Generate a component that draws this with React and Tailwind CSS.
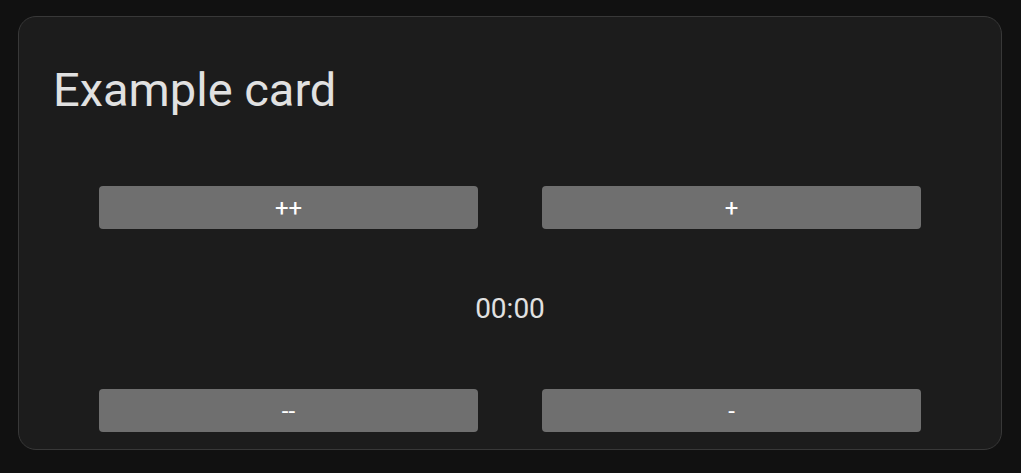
const Btn = ({ label }) => (
  <button className="h-[43px] w-[379px] rounded-[4px] bg-[#6f6f6f] text-[24px] leading-none text-white">
    {label}
  </button>
);

const App = () => {
  return (
    <div
      className="min-h-screen bg-[#111111] pl-[18px] pt-[16px]"
      style={{ fontFamily: "Roboto, 'Liberation Sans', sans-serif" }}
    >
      <div className="flex h-[434px] w-[984px] flex-col rounded-[18px] border border-[#383838] bg-[#1c1c1c]">
        <h1 className="pl-[34px] pt-[49px] text-[47px] leading-none text-[#e1e1e1]">Example card</h1>
        <div className="mt-[73px] flex justify-center gap-[64px]">
          <Btn label="++" />
          <Btn label="+" />
        </div>
        <div className="flex h-[160px] items-center justify-center text-[28px] text-[#e1e1e1]">00:00</div>
        <div className="flex justify-center gap-[64px]">
          <Btn label="--" />
          <Btn label="-" />
        </div>
      </div>
    </div>
  );
};

export default App;
